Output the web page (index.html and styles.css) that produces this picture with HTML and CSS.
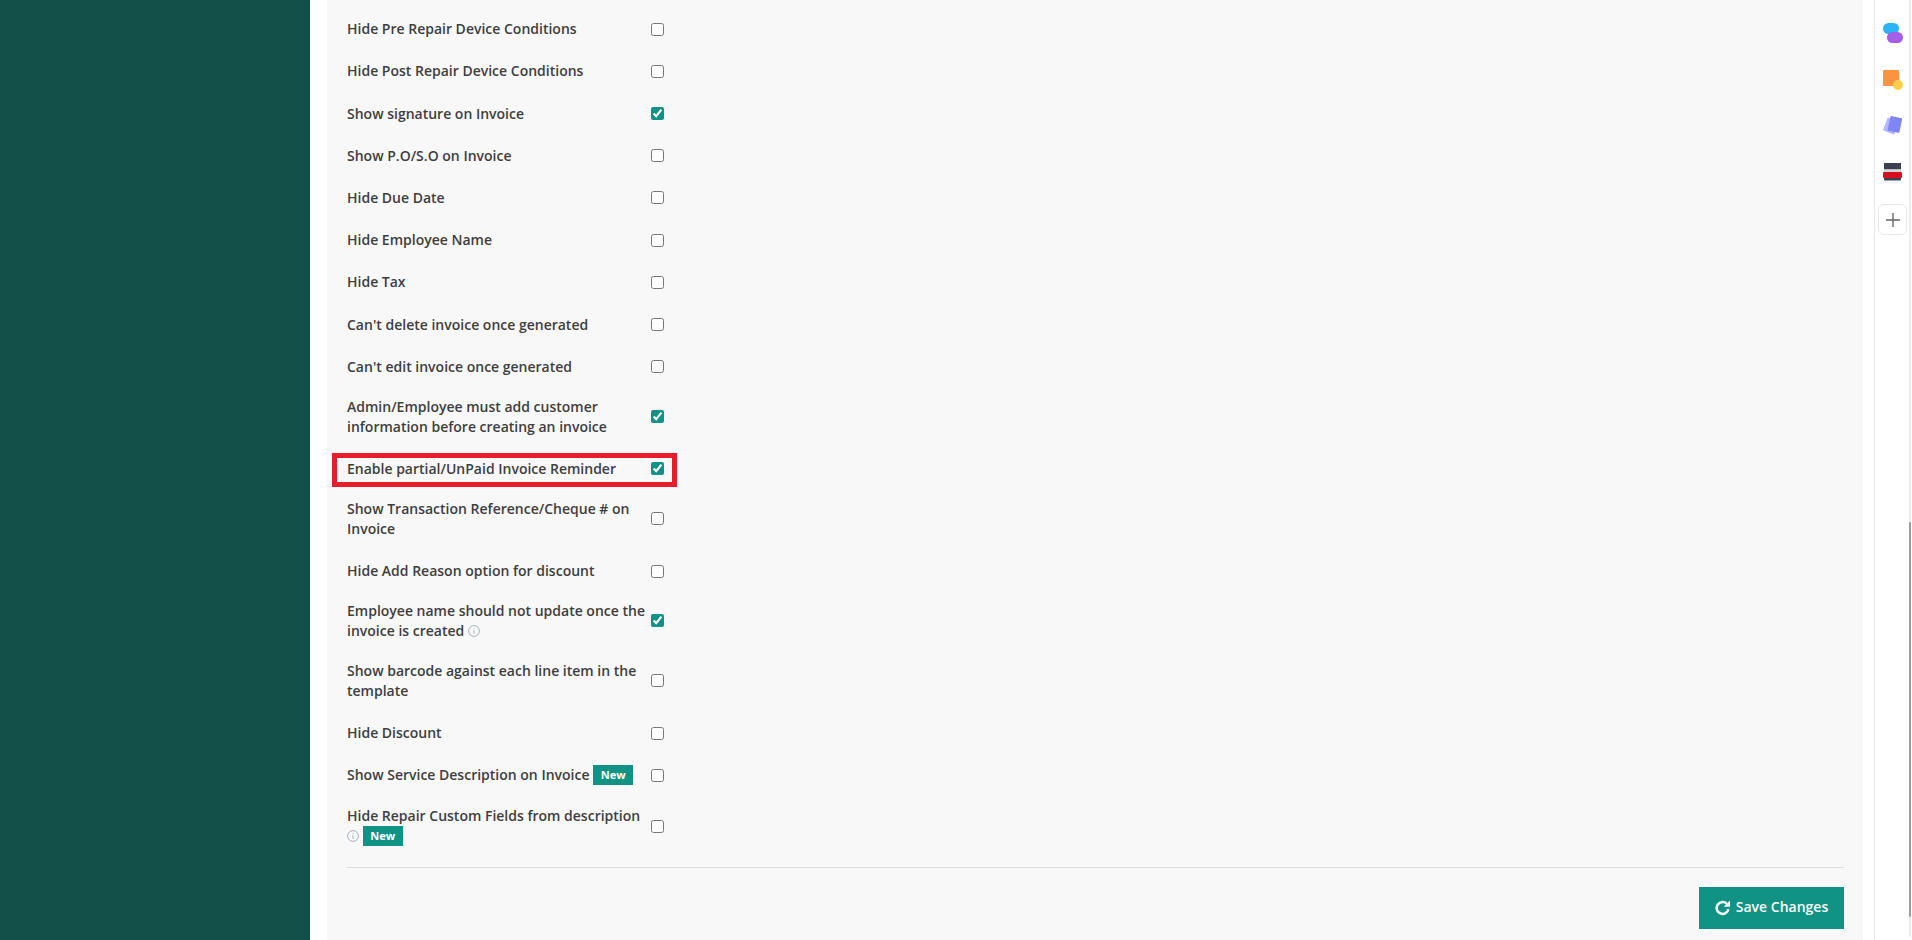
FILE: index.html
```html
<!DOCTYPE html>
<html lang="en">
<head>
<meta charset="utf-8">
<title>Invoice settings</title>
<link rel="stylesheet" href="styles.css">
</head>
<body>
<div class="app">
  <aside class="sidebar"></aside>
  <main class="panel">
    <form class="settings">
      <label class="row"><span class="name">Hide Pre Repair Device Conditions</span><input type="checkbox"></label>
      <label class="row"><span class="name">Hide Post Repair Device Conditions</span><input type="checkbox"></label>
      <label class="row"><span class="name">Show signature on Invoice</span><input type="checkbox" checked></label>
      <label class="row"><span class="name">Show P.O/S.O on Invoice</span><input type="checkbox"></label>
      <label class="row"><span class="name">Hide Due Date</span><input type="checkbox"></label>
      <label class="row"><span class="name">Hide Employee Name</span><input type="checkbox"></label>
      <label class="row"><span class="name">Hide Tax</span><input type="checkbox"></label>
      <label class="row"><span class="name">Can't delete invoice once generated</span><input type="checkbox"></label>
      <label class="row"><span class="name">Can't edit invoice once generated</span><input type="checkbox"></label>
      <label class="row two-line"><span class="name">Admin/Employee must add customer information before creating an invoice</span><input type="checkbox" checked></label>
      <label class="row highlighted"><span class="name">Enable partial/UnPaid Invoice Reminder</span><input type="checkbox" checked></label>
      <label class="row two-line"><span class="name">Show Transaction Reference/Cheque # on Invoice</span><input type="checkbox"></label>
      <label class="row"><span class="name">Hide Add Reason option for discount</span><input type="checkbox"></label>
      <label class="row two-line"><span class="name">Employee name should not update once the invoice is created <svg class="info" viewBox="0 0 12 12"><circle cx="6" cy="6" r="5.4"/><path d="M6 5.2v3.6M6 3.2v1"/></svg></span><input type="checkbox" checked></label>
      <label class="row two-line"><span class="name">Show barcode against each line item in the template</span><input type="checkbox"></label>
      <label class="row"><span class="name">Hide Discount</span><input type="checkbox"></label>
      <label class="row"><span class="name">Show Service Description on Invoice <b class="badge">New</b></span><input type="checkbox"></label>
      <label class="row two-line with-badge"><span class="name">Hide Repair Custom Fields from description <svg class="info" viewBox="0 0 12 12"><circle cx="6" cy="6" r="5.4"/><path d="M6 5.2v3.6M6 3.2v1"/></svg> <b class="badge">New</b></span><input type="checkbox"></label>
    </form>
    <div class="actions">
      <button class="save" type="button">
        <svg class="save-icon" viewBox="0 0 16 16"><path d="M13.4 9.2A5.9 5.9 0 1 1 11.6 3.6"/><path class="head" d="M15 .6v6.2H8.8z"/></svg>
        Save Changes
      </button>
    </div>
  </main>
  <div class="gutter"></div>
  <nav class="rail">
    <svg class="app-icon" viewBox="0 0 20 20"><rect x="0" y="0" width="16" height="11" rx="5.5" fill="#2bb5f4"/><rect x="4" y="9" width="16" height="11" rx="5.5" fill="#a35fe6"/></svg>
    <svg class="app-icon" viewBox="0 0 20 20"><rect x="0" y="0" width="16" height="16" rx="1" fill="#fb9440"/><circle cx="15" cy="15" r="5" fill="#fdd04c"/></svg>
    <svg class="app-icon" viewBox="0 0 20 20"><rect x="2" y="3" width="12" height="14" rx="1" fill="#b4b8fb" transform="rotate(20 8 10)"/><rect x="6" y="1" width="12" height="15" rx="1" fill="#7f86f5" transform="rotate(12 12 8)"/></svg>
    <svg class="app-icon" viewBox="0 0 20 20"><rect x="1" y="0" width="17" height="6.5" fill="#3c4150"/><rect x="1" y="14" width="17" height="3.5" rx="1" fill="#3c4150"/><rect x="1" y="6.5" width="17" height="2.5" fill="#d8d8d8"/><rect x="0" y="9" width="19" height="6" rx="1" fill="#d5101e"/></svg>
    <button class="add" type="button" aria-label="Add"><svg viewBox="0 0 14 14"><path d="M7 0v14M0 7h14"/></svg></button>
  </nav>
</div>
<div class="scrollbar"><div class="thumb"></div></div>
</body>
</html>
```
FILE: styles.css
```css
* { box-sizing: border-box; }
html, body { margin: 0; height: 100%; overflow: hidden; background: #fff; }
body { font-family: "Open Sans", "Liberation Sans", sans-serif; color: #3e3e3e; }
.app { display: flex; height: 940px; }
.sidebar { width: 310px; flex: none; background: #13504a; }
.panel { width: 1536px; margin-left: 17px; flex: none; background: #f8f8f8; padding: 8.15px 20px 0; }
.settings { width: 330px; }
.row { display: flex; align-items: center; min-height: 42.2px; font-size: 14px; font-weight: 600; line-height: 20px; }
.two-line { min-height: 60px; padding-bottom: 1.8px; }
.name { width: 304px; flex: none; }
.row input { width: 13px; height: 13px; margin: 0; flex: none; accent-color: #109384; }
.two-line input { margin-bottom: 1.2px; }
.with-badge input { margin: 2px 0 0; }
.highlighted { position: relative; }
.highlighted::after { content: ""; box-sizing: border-box; position: absolute; left: -15px; top: 5px; width: 345px; height: 34px; border: 5px solid #e61e2a; }
.info { display: inline-block; width: 12px; height: 12px; vertical-align: -1px; fill: none; stroke: #a2b2ba; stroke-width: 1; }
.badge { display: inline-block; width: 40px; height: 20px; line-height: 20px; text-align: center; background: #109384; color: #fff; font-size: 11px; font-weight: 700; vertical-align: top; }
.actions { width: 1497px; border-top: 1px solid #dedede; margin-top: 10.4px; padding-top: 19px; display: flex; justify-content: flex-end; }
.save { width: 145px; height: 42px; display: flex; align-items: center; justify-content: center; gap: 5px; border: 0; background: #109384; color: #fff; font: 600 14px "Open Sans", sans-serif; padding: 0 0 2px; }
.save-icon { width: 16px; height: 16px; margin-top: 2px; fill: none; stroke: #fff; stroke-width: 2.5; }
.save-icon .head { fill: #fff; stroke: none; }
.gutter { width: 11px; flex: none; }
.rail { flex: 1; border-left: 1px solid #e6e6e6; display: flex; flex-direction: column; align-items: center; padding-top: 23px; padding-right: 2px; gap: 26.7px; }
.app-icon { width: 20px; height: 20px; flex: none; }
.add { width: 29px; height: 31px; margin-top: -5.5px; padding: 0; background: #fff; border: 1px solid #e8e8e8; border-radius: 6px; display: flex; align-items: center; justify-content: center; }
.add svg { width: 14px; height: 14px; fill: none; stroke: #666; stroke-width: 1.4; }
.scrollbar { position: absolute; top: 0; left: 1909px; width: 2px; height: 937px; background: #ececec; }
.thumb { margin-top: 522px; height: 395px; background: #9a9a9a; border-radius: 1px; }
```
